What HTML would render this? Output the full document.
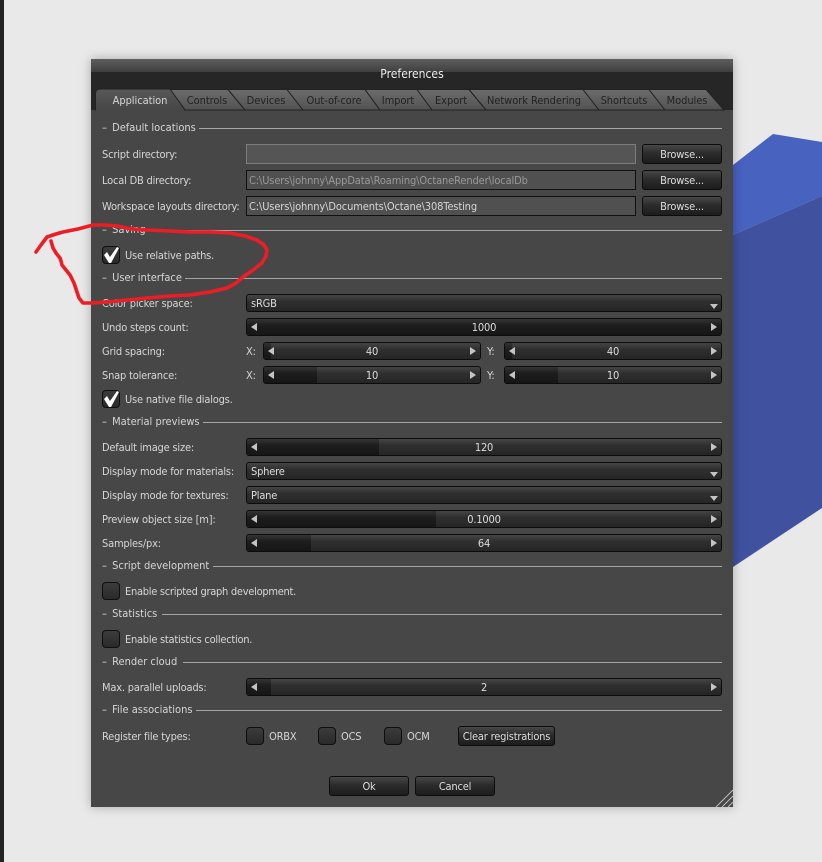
<!DOCTYPE html>
<html><head><meta charset="utf-8"><title>Preferences</title>
<style>
html,body{margin:0;padding:0}
body{width:822px;height:862px;overflow:hidden;background:#e9e9e9;position:relative;font:11px/20px "DejaVu Sans Condensed","DejaVu Sans","Liberation Sans",sans-serif;font-stretch:condensed;letter-spacing:-.2px;color:#d6d6d6}
#g{position:absolute;left:0;top:0}
.d{position:absolute;left:91px;top:59px;width:642px;height:748px;background:#474747;box-shadow:0 0 10px rgba(0,0,0,.28)}
.t{position:absolute;white-space:nowrap;height:20px;line-height:20px;margin-top:1px}
.h{letter-spacing:0}
.h span{margin-left:2px}
.l{position:absolute;height:1px;background:#a5a5a5;right:auto}
.i,.b,.s,.c{position:absolute;box-sizing:border-box;white-space:nowrap}
.i{left:246px;width:390px;height:20px;background:#505050;border:1px solid #111;padding-left:2px;line-height:19px;letter-spacing:-.13px}
.b{height:20px;border:1px solid #0c0c0c;border-radius:3px;background:linear-gradient(#474747,#2c2c2c 45%,#1d1d1d);text-align:center;line-height:20px;color:#dedede}
.s{height:18px;border:1px solid #0c0c0c;border-radius:3px;background:linear-gradient(#454545,#2f2f2f 40%,#262626);text-align:center;line-height:18px;color:#dedede;overflow:hidden}
.s i{position:absolute;left:0;top:0;bottom:0;background:linear-gradient(#333,#1e1e1e 40%,#161616)}
.s span{position:relative}
.s u,.s s{position:absolute;top:4px;width:0;height:0;border-top:4px solid transparent;border-bottom:4px solid transparent}
.s u{left:4px;border-right:6px solid #c4c4c4}
.s s{right:4px;border-left:6px solid #c4c4c4}
.s b{position:absolute;right:3px;top:9px;width:0;height:0;border-left:4px solid transparent;border-right:4px solid transparent;border-top:5px solid #c4c4c4}
.s em{position:absolute;left:4px;top:0;font-style:normal}
.c{width:18px;height:18px;border:1px solid #0e0e0e;border-radius:4px;background:linear-gradient(#3c3c3c,#2a2a2a)}
</style></head><body>
<div style="position:absolute;left:0;top:0;width:4px;height:862px;background:#232323"></div>
<svg id="g" width="822" height="862" viewBox="0 0 822 862">
<polygon points="733,165 773,134 822,142 822,196 733,235" fill="#4862c0"/>
<polygon points="733,235 822,196 822,508 733,567" fill="#40519f"/>
</svg>
<div class="d"></div>
<div style="position:absolute;left:91px;top:59px;width:642px;height:13px;background:linear-gradient(#5e5e5e,#3f3f3f)"></div>
<div style="position:absolute;left:91px;top:72px;width:642px;height:38px;background:#262626"></div>
<div class="t" style="left:91px;width:642px;text-align:center;top:63px;font-size:12px;letter-spacing:0;color:#eee">Preferences</div>
<svg style="position:absolute;left:0;top:0" width="822" height="862" viewBox="0 0 822 862">
<defs><linearGradient id="tg" x1="0" y1="0" x2="0" y2="1"><stop offset="0" stop-color="#6c6c6c"/><stop offset="1" stop-color="#525252"/></linearGradient>
<linearGradient id="ta" x1="0" y1="0" x2="0" y2="1"><stop offset="0" stop-color="#585858"/><stop offset="1" stop-color="#474747"/></linearGradient></defs>
<g fill="url(#tg)" stroke="#222" stroke-width="1">
<polygon points="170,89.5 228,89.5 245,110 185,110"/>
<polygon points="228,89.5 287,89.5 303,110 245,110"/>
<polygon points="287,89.5 365,89.5 380,110 303,110"/>
<polygon points="365,89.5 417,89.5 432,110 380,110"/>
<polygon points="417,89.5 469,89.5 486,110 432,110"/>
<polygon points="469,89.5 583,89.5 599,110 486,110"/>
<polygon points="583,89.5 649,89.5 665,110 599,110"/>
<polygon points="649,89.5 706,89.5 724,110 665,110"/>
</g>
<path d="M95.5 110V93Q96 89 100 89H170L185 110Z" fill="url(#ta)" stroke="#222"/>
<rect x="96" y="109" width="88" height="2" fill="#474747"/>
<g font-family="DejaVu Sans Condensed,DejaVu Sans,sans-serif" font-stretch="condensed" font-size="11" text-anchor="middle" fill="#222" letter-spacing="-.05">
<text x="140" y="104" fill="#d6d6d6">Application</text>
<text x="207" y="104">Controls</text>
<text x="266" y="104">Devices</text>
<text x="334" y="104">Out-of-core</text>
<text x="398" y="104">Import</text>
<text x="451" y="104">Export</text>
<text x="534" y="104">Network Rendering</text>
<text x="624" y="104">Shortcuts</text>
<text x="687" y="104">Modules</text>
</g>
</svg>

<div class="t h" style="left:102px;top:117px">– <span>Default locations</span></div><div class="l" style="left:199px;top:128px;width:523px"></div>
<div class="t" style="left:102px;top:144px">Script directory:</div>
<div class="i" style="top:144px;background:#555;border-color:#7c7c7c"></div>
<div class="b" style="left:642px;top:144px;width:80px">Browse...</div>
<div class="t" style="left:102px;top:170px">Local DB directory:</div>
<div class="i" style="top:170px;color:#999">C:\Users\johnny\AppData\Roaming\OctaneRender\localDb</div>
<div class="b" style="left:642px;top:170px;width:80px">Browse...</div>
<div class="t" style="left:102px;top:196px">Workspace layouts directory:</div>
<div class="i" style="top:196px">C:\Users\johnny\Documents\Octane\308Testing</div>
<div class="b" style="left:642px;top:196px;width:80px">Browse...</div>

<div class="t h" style="left:102px;top:219px">– <span>Saving</span></div><div class="l" style="left:149px;top:230px;width:573px"></div>
<div class="c" style="left:102px;top:246px"></div>
<div class="t" style="left:125px;top:245px">Use relative paths.</div>

<div class="t h" style="left:102px;top:267px">– <span>User interface</span></div><div class="l" style="left:185px;top:278px;width:537px"></div>
<div class="t" style="left:102px;top:293px">Color picker space:</div>
<div class="s" style="left:246px;top:294px;width:476px;text-align:left"><em>sRGB</em><b></b></div>
<div class="t" style="left:102px;top:317px">Undo steps count:</div>
<div class="s" style="left:246px;top:318px;width:476px"><i style="width:100%"></i><u></u><s></s><span>1000</span></div>
<div class="t" style="left:102px;top:341px">Grid spacing:</div>
<div class="t" style="left:246px;top:341px">X:</div>
<div class="s" style="left:263px;top:342px;width:218px"><i style="width:7px"></i><u></u><s></s><span>40</span></div>
<div class="t" style="left:487px;top:341px">Y:</div>
<div class="s" style="left:504px;top:342px;width:218px"><i style="width:7px"></i><u></u><s></s><span>40</span></div>
<div class="t" style="left:102px;top:365px">Snap tolerance:</div>
<div class="t" style="left:246px;top:365px">X:</div>
<div class="s" style="left:263px;top:366px;width:218px"><i style="width:53px"></i><u></u><s></s><span>10</span></div>
<div class="t" style="left:487px;top:365px">Y:</div>
<div class="s" style="left:504px;top:366px;width:218px"><i style="width:53px"></i><u></u><s></s><span>10</span></div>
<div class="c" style="left:102px;top:390px"></div>
<div class="t" style="left:125px;top:389px">Use native file dialogs.</div>

<div class="t h" style="left:102px;top:411px">– <span>Material previews</span></div><div class="l" style="left:203px;top:422px;width:519px"></div>
<div class="t" style="left:102px;top:437px">Default image size:</div>
<div class="s" style="left:246px;top:438px;width:476px"><i style="width:132px"></i><u></u><s></s><span>120</span></div>
<div class="t" style="left:102px;top:461px">Display mode for materials:</div>
<div class="s" style="left:246px;top:462px;width:476px;text-align:left"><em>Sphere</em><b></b></div>
<div class="t" style="left:102px;top:485px">Display mode for textures:</div>
<div class="s" style="left:246px;top:486px;width:476px;text-align:left"><em>Plane</em><b></b></div>
<div class="t" style="left:102px;top:509px">Preview object size [m]:</div>
<div class="s" style="left:246px;top:510px;width:476px"><i style="width:189px"></i><u></u><s></s><span>0.1000</span></div>
<div class="t" style="left:102px;top:533px">Samples/px:</div>
<div class="s" style="left:246px;top:534px;width:476px"><i style="width:64px"></i><u></u><s></s><span>64</span></div>

<div class="t h" style="left:102px;top:555px">– <span>Script development</span></div><div class="l" style="left:213px;top:566px;width:509px"></div>
<div class="c" style="left:102px;top:582px"></div>
<div class="t" style="left:125px;top:581px;letter-spacing:-.28px">Enable scripted graph development.</div>

<div class="t h" style="left:102px;top:603px">– <span>Statistics</span></div><div class="l" style="left:162px;top:614px;width:560px"></div>
<div class="c" style="left:102px;top:630px"></div>
<div class="t" style="left:125px;top:629px;letter-spacing:-.26px">Enable statistics collection.</div>

<div class="t h" style="left:102px;top:651px">– <span>Render cloud</span></div><div class="l" style="left:183px;top:662px;width:539px"></div>
<div class="t" style="left:102px;top:677px">Max. parallel uploads:</div>
<div class="s" style="left:246px;top:678px;width:476px"><i style="width:24px"></i><u></u><s></s><span>2</span></div>

<div class="t h" style="left:102px;top:699px">– <span>File associations</span></div><div class="l" style="left:196px;top:710px;width:526px"></div>
<div class="t" style="left:102px;top:726px">Register file types:</div>
<div class="c" style="left:246px;top:727px"></div><div class="t" style="left:269px;top:726px">ORBX</div>
<div class="c" style="left:318px;top:727px"></div><div class="t" style="left:341px;top:726px">OCS</div>
<div class="c" style="left:384px;top:727px"></div><div class="t" style="left:407px;top:726px">OCM</div>
<div class="b" style="left:458px;top:726px;width:97px">Clear registrations</div>
<div class="b" style="left:329px;top:776px;width:80px">Ok</div>
<div class="b" style="left:415px;top:776px;width:80px">Cancel</div>

<svg style="position:absolute;left:0;top:0" width="822" height="862" viewBox="0 0 822 862">
<g stroke="#bdbdbd" stroke-width="1" fill="none">
<path d="M716 807L733 790M722 807L733 796M728 807L733 802"/>
</g>
<g fill="#fff">
<path d="M104 255L107 252L110 257L117 247L119 248L111 263L109 263Z"/>
<path d="M104 399L107 396L110 401L117 391L119 392L111 407L109 407Z"/>
</g>
<path d="M36 252L41 245L47 237L56 234L63 232L78 229L93 225L105 225L117 226L132 229L147 230L170 231L190 232L210 232L230 233L245 236L257 240L264 245L267 250L266 256L262 263L253 270L243 277L236 283L227 288L210 292L190 295L170 296L147 298L127 300L107 302L93 303L83 303L79 298L77 292L74 283L70 275L66 270L62 265L61 261L60 258L56 253L53 248L51 241" fill="none" stroke="#ee1c25" stroke-width="3.6" stroke-linejoin="round" stroke-linecap="round"/>
</svg>
</body></html>
